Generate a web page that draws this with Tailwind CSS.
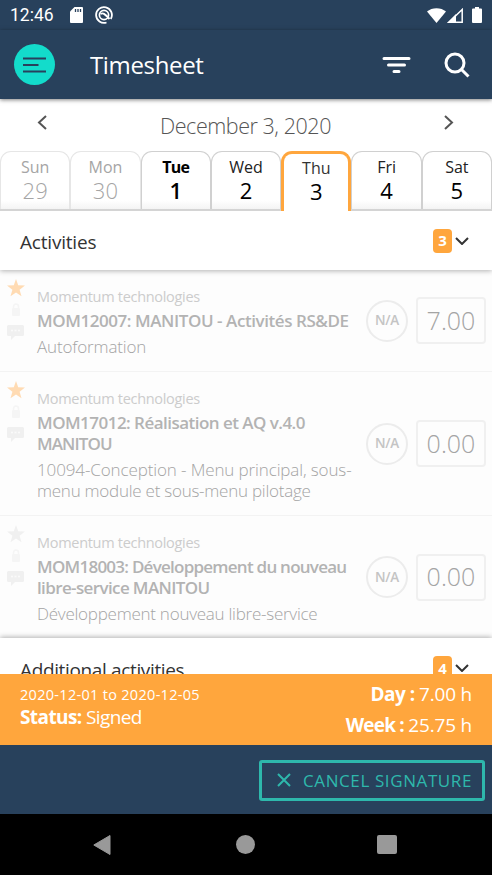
<!DOCTYPE html>
<html lang="en">
<head>
    <meta charset="UTF-8">
    <meta name="viewport" content="width=device-width, initial-scale=1.0">
    <title>Timesheet</title>
    <script src="https://cdn.jsdelivr.net/npm/@tailwindcss/browser@4"></script>
</head>
<body class="w-[492px] h-[875px] overflow-hidden bg-white flex flex-col font-['Open_Sans',sans-serif] text-[#555] whitespace-nowrap">

    <!-- Icons shared by the rows -->
    <svg class="hidden">
        <symbol id="star" viewBox="0 0 18 18"><path d="M9 0l2.2 6.300 6.800.2-5.400 4.200 1.900 6.600L9 13.400l-5.500 3.900 1.900-6.600L0 6.500l6.800-.2z" fill="currentColor"/></symbol>
        <symbol id="lock" viewBox="0 0 10 13"><path d="M2.500 5V3.500a2.500 2.500 0 0 1 5 0V5" fill="none" stroke="currentColor" stroke-width="1.500"/><rect x="1" y="5" width="8" height="8" rx="1" fill="currentColor"/></symbol>
        <symbol id="comment" viewBox="0 0 17 15"><path d="M1.500 0h14A1.500 1.500 0 0 1 17 1.500v8a1.500 1.500 0 0 1-1.500 1.500H8l-4 4v-4H1.500A1.500 1.500 0 0 1 0 9.500v-8A1.500 1.500 0 0 1 1.500 0z" fill="currentColor"/><path d="M4 5.500h9" stroke="#fafafa" stroke-width="1.500" stroke-dasharray="2 1.500"/></symbol>
        <symbol id="chevron" viewBox="0 0 14 8"><path d="M1 1l6 6 6-6" fill="none" stroke="currentColor" stroke-width="2"/></symbol>
    </svg>

    <!-- Status bar -->
    <div class="h-[30px] shrink-0 bg-[#28415c] text-white flex items-center pl-[10px] pr-[10px]">
        <span class="w-[60px] font-[Roboto] text-[17.5px]">12:46</span>
        <svg class="w-[13px] h-4" viewBox="0 0 13 16"><path d="M4.500 0H12a1 1 0 0 1 1 1v14a1 1 0 0 1-1 1H1a1 1 0 0 1-1-1V4.500z" fill="#fff"/><path d="M5.500 2v3M8 2v3M10.500 2v3" stroke="#28415c" stroke-width="1.300"/></svg>
        <svg class="ml-3 w-[18px] h-[18px]" viewBox="0 0 18 18" fill="none" stroke="#fff"><path d="M11.500 16.500A7.900 7.900 0 1 1 15.800 13" stroke-width="1.800"/><circle cx="9" cy="9" r="4.600" stroke-width="1.700"/><path d="M5.500 8c2.500-1.500 4-.5 9 5" stroke-width="1.900"/></svg>
        <div class="ml-auto flex items-center">
            <svg class="w-[19px] h-[15px]" viewBox="0 0 19 15"><path d="M0 3.500C5-1 14-1 19 3.500L9.500 15z" fill="#fff"/></svg>
            <svg class="ml-px w-4 h-[15px]" viewBox="0 0 16 15"><path d="M2 14.200L15.200 1.500v12.700z" fill="none" stroke="#fff" stroke-width="1.500"/><path d="M0 15L9 6v9z" fill="#fff"/></svg>
            <svg class="ml-[9px] w-[10px] h-4" viewBox="0 0 10 16"><path d="M3 0h4v1.500h2a1 1 0 0 1 1 1V15a1 1 0 0 1-1 1H1a1 1 0 0 1-1-1V2.500a1 1 0 0 1 1-1h2z" fill="#fff"/></svg>
        </div>
    </div>

    <!-- Header -->
    <header class="relative z-10 h-[69px] shrink-0 bg-[#28415c] text-white flex items-center pl-[14px] pr-[22px] shadow-[0_1px_4px_rgba(0,0,0,0.5)]">
        <button class="w-[41px] h-[41px] rounded-full bg-[#13dccb] flex items-center justify-center">
            <svg class="w-[23px] h-4" viewBox="0 0 23 16" stroke="#28415c" stroke-width="2"><path d="M0 1.500h23M0 8h15.500M0 14.500h23"/></svg>
        </button>
        <h1 class="ml-[35px] text-[24px] tracking-[-0.35px]">Timesheet</h1>
        <svg class="ml-auto w-[29px] h-[18px]" viewBox="0 0 29 18" stroke="#fff" stroke-width="3" stroke-linecap="round"><path d="M2 2.500h25M6.500 9h16M12 15.500h5"/></svg>
        <svg class="ml-[33px] w-[26px] h-[26px]" viewBox="0 0 26 26" fill="none" stroke="#fff" stroke-width="3"><circle cx="11" cy="11" r="9"/><path d="M17.500 17.500l7 7"/></svg>
    </header>

    <!-- Date picker -->
    <div class="h-[52px] shrink-0 flex items-center justify-between pl-[37px] pr-[38px]">
        <svg class="mb-[5px] w-[10px] h-[15px]" viewBox="0 0 10 15" fill="none" stroke="#555" stroke-width="2"><path d="M9 1L2 7.500 9 14"/></svg>
        <span class="pt-[2px] text-[21.5px] font-light tracking-[-0.45px]">December 3, 2020</span>
        <svg class="mb-[5px] w-[10px] h-[15px]" viewBox="0 0 10 15" fill="none" stroke="#555" stroke-width="2"><path d="M1 1l7 6.500L1 14"/></svg>
    </div>
    <div class="h-[60px] shrink-0 grid grid-cols-7 text-center text-black border-b-2 border-[#d4d4d4]">
        <div class="border border-b-0 border-[#e6e6e6] rounded-t-[11px] pt-1 text-[#a5a5a5] bg-linear-to-b from-white from-85% to-[#f4f4f4]"><div class="text-[16px] leading-[23px]">Sun</div><div class="text-[22px] leading-[22px] font-light">29</div></div>
        <div class="border border-b-0 border-[#e6e6e6] rounded-t-[11px] pt-1 text-[#a5a5a5] bg-linear-to-b from-white from-85% to-[#f4f4f4]"><div class="text-[16px] leading-[23px]">Mon</div><div class="text-[22px] leading-[22px] font-light">30</div></div>
        <div class="border border-b-0 border-[#d0d0d0] rounded-t-[11px] pt-1 font-semibold bg-linear-to-b from-white from-85% to-[#f4f4f4]"><div class="text-[16px] leading-[23px] tracking-[-0.7px] font-bold">Tue</div><div class="text-[22px] leading-[22px]">1</div></div>
        <div class="border border-b-0 border-[#d0d0d0] rounded-t-[11px] pt-1 bg-linear-to-b from-white from-85% to-[#f4f4f4]"><div class="text-[16px] leading-[23px] text-[#222]">Wed</div><div class="text-[22px] leading-[22px]">2</div></div>
        <div class="border-3 border-b-0 -mb-[2px] border-[#ffa63d] rounded-t-[11px] pt-[3px] bg-white"><div class="text-[16px] leading-[23px] text-[#333]">Thu</div><div class="text-[22px] leading-[22px]">3</div></div>
        <div class="border border-b-0 border-[#d0d0d0] rounded-t-[11px] pt-1 bg-linear-to-b from-white from-85% to-[#f4f4f4]"><div class="text-[16px] leading-[23px] text-[#222]">Fri</div><div class="text-[22px] leading-[22px]">4</div></div>
        <div class="border border-b-0 border-[#d0d0d0] rounded-t-[11px] pt-1 bg-linear-to-b from-white from-85% to-[#f4f4f4]"><div class="text-[16px] leading-[23px] text-[#222]">Sat</div><div class="text-[22px] leading-[22px]">5</div></div>
    </div>

    <!-- Activities -->
    <div class="relative z-10 h-[59px] shrink-0 bg-white flex items-center pl-5 pr-[23px] text-[#333] shadow-[0_1px_5px_rgba(0,0,0,0.3)] [clip-path:inset(0_0_-10px_0)]">
        <h2 class="pt-[3px] text-[19px] tracking-[-0.2px]">Activities</h2>
        <span class="ml-auto w-[19px] h-6 rounded bg-[#ffa63d] text-white text-[15px] font-bold flex items-center justify-center">3</span>
        <svg class="ml-[3px] w-[14px] h-2"><use href="#chevron"/></svg>
    </div>
    <div class="h-[404px] overflow-hidden">
        <div class="h-[102px] flex bg-[#fdfdfd] border-b border-[#f3f3f3] pr-[6px]">
            <div class="shrink-0 w-[37px] pt-[9px] pl-[7px] text-[#f0f0f0]">
                <svg class="w-[18px] h-[18px] text-[#ffdbb3]"><use href="#star"/></svg>
                <svg class="mt-[6px] ml-1 w-[10px] h-[13px] text-[#f5f5f5]"><use href="#lock"/></svg>
                <svg class="mt-[9px] w-[17px] h-[15px]"><use href="#comment"/></svg>
            </div>
            <div class="flex-1 min-w-0 pt-4">
                <div class="text-[14.5px] leading-[22px] font-medium tracking-[-0.3px] text-[#ccc]">Momentum technologies</div>
                <div class="mt-[2px] text-[17px] leading-[21px] font-semibold tracking-[-0.43px] text-[#b3b3b3]">MOM12007: MANITOU - Activités RS&amp;DE</div>
                <div class="mt-[5px] text-[17px] leading-[21px] font-light tracking-[-0.15px] text-[#a4a4a4]">Autoformation</div>
            </div>
            <div class="shrink-0 self-center w-[42px] h-[42px] rounded-full border-2 border-[#ececec] flex items-center justify-center text-[13.5px] font-semibold tracking-[-0.3px] text-[#c4c4c4]">N/A</div>
            <div class="shrink-0 self-center ml-2 w-[70px] h-[47px] rounded border-2 border-[#f0f0f0] flex items-center justify-center text-[25px] font-light text-[#a4a4a4]">7.00</div>
        </div>
        <div class="h-[144px] flex bg-[#fdfdfd] border-b border-[#f3f3f3] pr-[6px]">
            <div class="shrink-0 w-[37px] pt-[9px] pl-[7px] text-[#f0f0f0]">
                <svg class="w-[18px] h-[18px] text-[#ffdbb3]"><use href="#star"/></svg>
                <svg class="mt-[6px] ml-1 w-[10px] h-[13px] text-[#f5f5f5]"><use href="#lock"/></svg>
                <svg class="mt-[9px] w-[17px] h-[15px]"><use href="#comment"/></svg>
            </div>
            <div class="flex-1 min-w-0 pt-4">
                <div class="text-[14.5px] leading-[22px] font-medium tracking-[-0.3px] text-[#ccc]">Momentum technologies</div>
                <div class="mt-[2px] text-[17px] leading-[21px] font-semibold tracking-[-0.53px] text-[#b3b3b3]">MOM17012: Réalisation et AQ v.4.0<br><span class="tracking-[-0.9px]">MANITOU</span></div>
                <div class="mt-[5px] text-[17px] leading-[21px] font-light tracking-[-0.12px] text-[#a4a4a4]">10094-Conception - Menu principal, sous-<br><span class="tracking-[-0.25px]">menu module et sous-menu pilotage</span></div>
            </div>
            <div class="shrink-0 self-center w-[42px] h-[42px] rounded-full border-2 border-[#ececec] flex items-center justify-center text-[13.5px] font-semibold tracking-[-0.3px] text-[#c4c4c4]">N/A</div>
            <div class="shrink-0 self-center ml-2 w-[70px] h-[47px] rounded border-2 border-[#f0f0f0] flex items-center justify-center text-[25px] font-light text-[#a4a4a4]">0.00</div>
        </div>
        <div class="h-[122px] flex bg-[#fdfdfd] pr-[6px]">
            <div class="shrink-0 w-[37px] pt-[9px] pl-[7px] text-[#f0f0f0]">
                <svg class="w-[18px] h-[18px]"><use href="#star"/></svg>
                <svg class="mt-[6px] ml-1 w-[10px] h-[13px] text-[#f5f5f5]"><use href="#lock"/></svg>
                <svg class="mt-[9px] w-[17px] h-[15px]"><use href="#comment"/></svg>
            </div>
            <div class="flex-1 min-w-0 pt-4">
                <div class="text-[14.5px] leading-[22px] font-medium tracking-[-0.3px] text-[#ccc]">Momentum technologies</div>
                <div class="mt-[2px] text-[17px] leading-[21px] font-semibold tracking-[-0.75px] text-[#b3b3b3]">MOM18003: Développement du nouveau<br><span class="tracking-[-0.62px]">libre-service MANITOU</span></div>
                <div class="mt-[5px] text-[17px] leading-[21px] font-light tracking-[-0.25px] text-[#a4a4a4]">Développement nouveau libre-service</div>
            </div>
            <div class="shrink-0 self-center w-[42px] h-[42px] rounded-full border-2 border-[#ececec] flex items-center justify-center text-[13.5px] font-semibold tracking-[-0.3px] text-[#c4c4c4]">N/A</div>
            <div class="shrink-0 self-center ml-2 w-[70px] h-[47px] rounded border-2 border-[#f0f0f0] flex items-center justify-center text-[25px] font-light text-[#a4a4a4]">0.00</div>
        </div>

        <!-- Additional activities -->
        <div class="relative h-[60px] bg-white flex items-center pl-5 pr-[23px] text-[#333] shadow-[0_-1px_5px_rgba(0,0,0,0.3)]">
            <h2 class="pt-[5px] text-[19px] tracking-[-0.36px]">Additional activities</h2>
            <span class="ml-auto w-[19px] h-6 rounded bg-[#ffa63d] text-white text-[15px] font-bold flex items-center justify-center">4</span>
            <svg class="ml-[3px] w-[14px] h-2"><use href="#chevron"/></svg>
        </div>
    </div>

    <!-- Totals -->
    <div class="h-[71px] shrink-0 bg-[#ffa63d] text-white flex justify-between pl-5 pr-5">
        <div class="pt-[10px]">
            <div class="text-[14.5px] leading-[22px] tracking-[0.3px]">2020-12-01 to 2020-12-05</div>
            <div class="text-[19px] leading-[22px] tracking-[-0.6px]"><b class="font-bold">Status:</b> Signed</div>
        </div>
        <div class="pt-[5px] text-right text-[19px] leading-[30.5px] tracking-[-0.5px]">
            <div><b class="font-bold">Day :</b> <span class="tracking-[-0.2px]">7.00 h</span></div>
            <div><b class="font-bold tracking-[-0.8px]">Week :</b> <span class="tracking-[-0.2px]">25.75 h</span></div>
        </div>
    </div>
    <div class="h-[69px] shrink-0 bg-[#28415c] flex items-center justify-end pr-[7px]">
        <button class="w-[226px] h-[41px] mt-px border-3 border-[#2eb8ac] rounded-[3px] text-[#2eb8ac] flex items-center pl-[15px]">
            <svg class="w-[14px] h-[14px]" viewBox="0 0 14 14" stroke="currentColor" stroke-width="2"><path d="M1 1l12 12M13 1L1 13"/></svg>
            <span class="ml-3 pt-px text-[17px] tracking-[0.6px]">CANCEL SIGNATURE</span>
        </button>
    </div>

    <!-- Android navigation -->
    <nav class="h-[61px] shrink-0 bg-black flex items-center justify-between pl-[93px] pr-[95px]">
        <svg class="w-[18px] h-5" viewBox="0 0 18 20"><path d="M17 .5v19L.8 10z" fill="#999" stroke="#999" stroke-linejoin="round"/></svg>
        <span class="ml-[2px] w-[19px] h-[19px] rounded-full bg-[#999]"></span>
        <span class="w-[20px] h-[19px] rounded-[2px] bg-[#999]"></span>
    </nav>
</body>
</html>
